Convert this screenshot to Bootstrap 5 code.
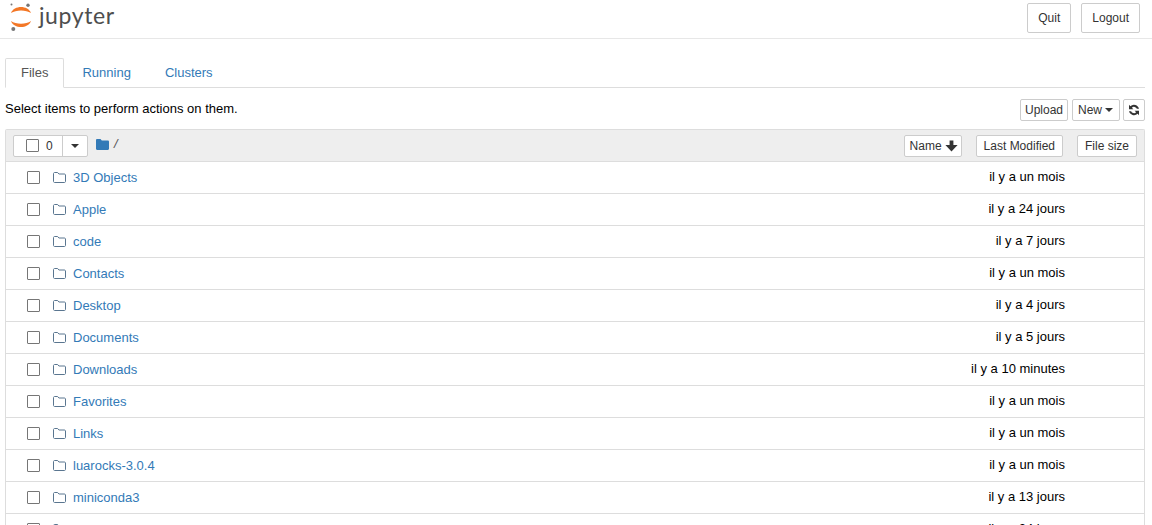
<!DOCTYPE html>
<html lang="fr">
<head>
    <meta charset="UTF-8">
    <meta name="viewport" content="width=device-width, initial-scale=1.0">
    <title>Home</title>
    <link href="https://cdn.jsdelivr.net/npm/bootstrap@5.3.0/dist/css/bootstrap.min.css" rel="stylesheet">
    <style>
        html, body { height: 525px; overflow: hidden; }
        body {
            font: 13px/18px "Liberation Sans", Arial, sans-serif;
            color: #000;
            background: #fff;
        }
        .top-bar {
            height: 39px;
            padding: 0 12px 2px 10px;
            border-bottom: 1px solid #e7e7e7;
        }
        .logo-word {
            font: 400 23px/28px Lato, sans-serif;
            color: #4e4e4e;
            letter-spacing: .6px;
            margin-left: 6px;
            margin-top: -7px;
        }
        .jp-btn {
            font: 12px/18px "Liberation Sans", Arial, sans-serif;
            color: #333;
            background: #fff;
            border: 1px solid #ccc;
            border-radius: 2px;
            padding: 1px 4px;
            height: 22px;
        }
        .top-btn { height: 30px; padding: 5px 10px; }
        .top-gap { gap: 10px; }
        .page-area { padding: 0 7px 0 5px; }
        .jp-tabs {
            margin-top: 19px;
            height: 30px;
            border-bottom: 1px solid #ddd;
            --bs-nav-tabs-border-color: #ddd;
        }
        .jp-tabs .nav-link {
            font-size: 13px;
            line-height: 18px;
            height: 30px;
            padding: 5px 15px;
            margin-right: 2px;
            color: #337ab7;
            border-radius: 2px 2px 0 0;
        }
        .jp-tabs .nav-link.active { color: #555; border-color: #ddd #ddd #fff; }
        .action-row { height: 41px; padding-top: 11px; }
        .hint-text { margin-top: 1px; }
        .file-box { border: 1px solid #ddd; border-bottom: 0; border-radius: 2px 2px 0 0; }
        .box-head {
            height: 32px;
            padding: 0 7px;
            background: #eee;
            border-bottom: 1px solid #ddd;
        }
        .sort-btns { gap: 14px; }
        .sort-wide { padding-left: 7px; padding-right: 7px; }
        .sort-name { padding-left: 5px; padding-right: 3px; gap: 3px; }
        .new-btn { padding-left: 5px; padding-right: 5px; gap: 3px; width: 48px; }
        .refresh-btn { width: 22px; padding: 0; margin-left: 3px; justify-content: center; }
        .select-group { width: 75px; height: 22px; border: 1px solid #ccc; border-radius: 2px; background: #fff; }
        .select-left { width: 49px; border-right: 1px solid #ccc; color: #333; font-size: 12px; padding-left: 12px; gap: 7px; }
        .select-right { width: 24px; }
        .caret-down { width: 0; height: 0; border-top: 4px solid #333; border-left: 4px solid transparent; border-right: 4px solid transparent; }
        .tick-box { width: 13px; height: 13px; border: 1px solid #767676; border-radius: 1px; background: #fff; flex: none; }
        .crumb { color: #337ab7; margin-left: 8px; gap: 5px; margin-top: -3px; }
        .crumb i { color: #555; font-style: italic; }
        .file-row {
            height: 32px;
            padding-left: 21px;
            border-bottom: 1px solid #ddd;
        }
        .file-name { color: #337ab7; text-decoration: none; font-size: 13px; margin-left: 7px; }
        .folder-ico { margin-left: 13px; flex: none; }
        .file-when { margin-left: auto; width: 300px; text-align: right; margin-right: 79px; margin-top: -2px; }
    </style>
</head>
<body>
    <div class="top-bar d-flex align-items-center">
        <svg width="23" height="30" viewBox="0 0 23 30" aria-hidden="true">
            <circle cx="18" cy="2.3" r="1.7" fill="#767677"/>
            <circle cx="1.5" cy="1.5" r="1" fill="#767677"/>
            <circle cx="3.3" cy="26" r="2" fill="#767677"/>
            <path d="M1 10C4 2 18 2 21 10C16 6.5 6 6.5 1 10Z" fill="#f37726"/>
            <path d="M1 18C4 26 18 26 21 18C16 21.5 6 21.5 1 18Z" fill="#f37726"/>
        </svg>
        <span class="logo-word">jupyter</span>
        <div class="ms-auto d-flex top-gap">
            <button type="button" class="btn jp-btn top-btn">Quit</button>
            <button type="button" class="btn jp-btn top-btn">Logout</button>
        </div>
    </div>

    <div class="page-area">
        <ul class="nav nav-tabs jp-tabs">
            <li class="nav-item"><a class="nav-link active" href="#">Files</a></li>
            <li class="nav-item"><a class="nav-link" href="#">Running</a></li>
            <li class="nav-item"><a class="nav-link" href="#">Clusters</a></li>
        </ul>

        <div class="action-row d-flex align-items-start">
            <span class="hint-text">Select items to perform actions on them.</span>
            <div class="ms-auto d-flex">
                <button type="button" class="btn jp-btn">Upload</button>
                <button type="button" class="btn jp-btn new-btn ms-1 d-flex align-items-center">New <span class="caret-down"></span></button>
                <button type="button" class="btn jp-btn refresh-btn d-flex align-items-center">
                    <svg width="12" height="12" viewBox="0 0 12 12" aria-hidden="true">
                        <path d="M11 4.8A5.2 5.2 0 0 0 2.4 2.2L1 .8V5.2H5.4L3.9 3.7A3.1 3.1 0 0 1 8.9 4.8ZM1 7.2A5.2 5.2 0 0 0 9.6 9.8L11 11.2V6.8H6.6L8.1 8.3A3.1 3.1 0 0 1 3.1 7.2Z" fill="#333"/>
                    </svg>
                </button>
            </div>
        </div>

        <div class="file-box">
            <div class="box-head d-flex align-items-center">
                <div class="select-group d-flex">
                    <div class="select-left d-flex align-items-center"><span class="tick-box"></span>0</div>
                    <div class="select-right d-flex align-items-center justify-content-center"><span class="caret-down"></span></div>
                </div>
                <div class="crumb d-flex align-items-center">
                    <svg width="13" height="11" viewBox="0 0 13 11" aria-hidden="true"><path d="M0 1.2C0 .5.5 0 1.2 0H4.5L5.8 1.6H11.8C12.5 1.6 13 2.1 13 2.8V9.8C13 10.5 12.5 11 11.8 11H1.2C.5 11 0 10.5 0 9.8Z" fill="#337ab7"/></svg>
                    <i>/</i>
                </div>
                <div class="ms-auto d-flex sort-btns">
                    <button type="button" class="btn jp-btn sort-name d-flex align-items-center">Name
                        <svg width="13" height="12" viewBox="0 0 13 12" aria-hidden="true"><path d="M4.6 .5H8.4V5H12.6L6.5 11.6 .4 5H4.6Z" fill="#333"/></svg>
                    </button>
                    <button type="button" class="btn jp-btn sort-wide">Last Modified</button>
                    <button type="button" class="btn jp-btn sort-wide">File size</button>
                </div>
            </div>
            <div id="fileRows"></div>
        </div>
    </div>

    <script>
        const files = [
            ['3D Objects', 'il y a un mois'],
            ['Apple', 'il y a 24 jours'],
            ['code', 'il y a 7 jours'],
            ['Contacts', 'il y a un mois'],
            ['Desktop', 'il y a 4 jours'],
            ['Documents', 'il y a 5 jours'],
            ['Downloads', 'il y a 10 minutes'],
            ['Favorites', 'il y a un mois'],
            ['Links', 'il y a un mois'],
            ['luarocks-3.0.4', 'il y a un mois'],
            ['miniconda3', 'il y a 13 jours'],
            ['Music', 'il y a 24 jours']
        ];
        const folderIcon = '<svg class="folder-ico" width="13" height="11" viewBox="0 0 13 11" aria-hidden="true"><path d="M.5 1.5C.5 1 1 .5 1.5 .5H4.6L5.9 2H11.5C12 2 12.5 2.5 12.5 3V9.5C12.5 10 12 10.5 11.5 10.5H1.5C1 10.5 .5 10 .5 9.5Z" fill="none" stroke="#5a7690"/></svg>';
        document.getElementById('fileRows').innerHTML = files.map(function (f) {
            return '<div class="file-row d-flex align-items-center"><span class="tick-box"></span>' + folderIcon +
                '<a class="file-name" href="#">' + f[0] + '</a><span class="file-when">' + f[1] + '</span></div>';
        }).join('');
    </script>
    <script src="https://cdn.jsdelivr.net/npm/bootstrap@5.3.0/dist/js/bootstrap.bundle.min.js"></script>
</body>
</html>
